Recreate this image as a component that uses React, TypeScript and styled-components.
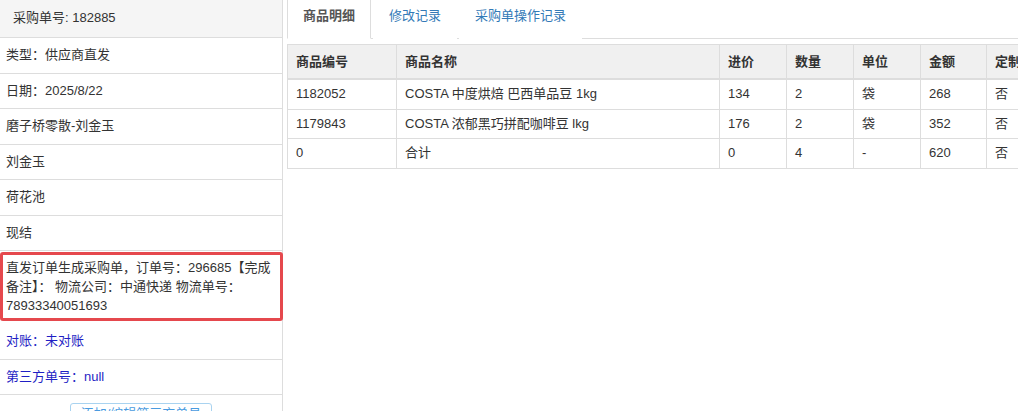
import styled, { createGlobalStyle } from 'styled-components'

type Tone = 'plain' | 'link'

type SideItemProps = {
  $tone?: Tone
  $marked?: boolean
}

type TabProps = {
  $active?: boolean
}

type RowType = {
  code: string
  name: string
  price: string
  qty: string
  unit: string
  amount: string
  custom: string
}

const GlobalStyle = createGlobalStyle`
  html, body {
    margin: 0;
    padding: 0;
    background: #fff;
  }

  body {
    font-family: 'Liberation Sans', 'Noto Sans CJK SC', sans-serif;
    font-size: 13px;
    color: #333;
  }
`

const Page = styled.div`
  display: flex;
  width: 1018px;
  height: 411px;
  overflow: hidden;
`

const Sidebar = styled.aside`
  width: 282px;
  flex-shrink: 0;
  border-right: 1px solid #ddd;
  display: flex;
  flex-direction: column;
`

const SideHeader = styled.div`
  background: #f5f5f5;
  padding: 8px 13px 10px;
  line-height: 19px;
  border-bottom: 1px solid #ddd;
`

const SideItem = styled.div<SideItemProps>`
  padding: ${p => (p.$marked ? '3px' : '8px 6px')};
  line-height: ${p => (p.$marked ? '19px' : '18.5px')};
  border-bottom: 1px solid #ddd;
  color: ${p => (p.$tone === 'link' ? '#1f1fc4' : '#333')};
  ${p => p.$marked && `
    border: 3px solid #e5484d;
    border-radius: 3px;
    margin-right: -1px;
    margin-top: 1px;
    margin-bottom: 3px;
  `}
`

const ButtonRow = styled.div`
  display: flex;
  justify-content: center;
  padding-top: 8px;
`

const OutlineButton = styled.button`
  font-family: inherit;
  font-size: 13px;
  line-height: 18px;
  color: #4a9be0;
  background: #fff;
  border: 1px solid #a9d3f0;
  border-radius: 3px;
  padding: 1px 10px 4px;
`

const Main = styled.main`
  flex: 1;
  min-width: 0;
  padding-left: 4px;
  overflow: hidden;
`

const TabBar = styled.nav`
  display: flex;
  border-bottom: 1px solid #ddd;
  height: 38px;
`

const Tab = styled.div<TabProps>`
  margin-right: 2px;
  padding: 7px 15px 11px;
  line-height: 18px;
  border: 1px solid ${p => (p.$active ? '#ddd' : 'transparent')};
  border-top: none;
  border-bottom-color: ${p => (p.$active ? '#fff' : 'transparent')};
  background: #fff;
  margin-bottom: -1px;
  color: ${p => (p.$active ? '#555' : '#337ab7')};
  font-weight: ${p => (p.$active ? 'bold' : 'normal')};
`

const Table = styled.table`
  margin-top: 5px;
  border-collapse: collapse;
  table-layout: fixed;
  width: 800px;
  border: 1px solid #ddd;
`

const HeadCell = styled.th`
  text-align: left;
  font-weight: bold;
  background: #f0f0f0;
  padding: 7px 8px;
  line-height: 19px;
  border: 1px solid #ddd;
  border-bottom: 2px solid #ddd;
  white-space: nowrap;
  overflow: hidden;
`

const Cell = styled.td`
  padding: 5px 8px;
  line-height: 18.5px;
  border: 1px solid #ddd;
  white-space: nowrap;
  overflow: hidden;
`

const columns = [
  { title: '商品编号', width: 109 },
  { title: '商品名称', width: 323 },
  { title: '进价', width: 67 },
  { title: '数量', width: 67 },
  { title: '单位', width: 67 },
  { title: '金额', width: 66 },
  { title: '定制', width: 100 },
]

const rows: RowType[] = [
  { code: '1182052', name: 'COSTA 中度烘焙 巴西单品豆 1kg', price: '134', qty: '2', unit: '袋', amount: '268', custom: '否' },
  { code: '1179843', name: 'COSTA 浓郁黑巧拼配咖啡豆 lkg', price: '176', qty: '2', unit: '袋', amount: '352', custom: '否' },
  { code: '0', name: '合计', price: '0', qty: '4', unit: '-', amount: '620', custom: '否' },
]

export default function App () {
  return (
    <>
      <GlobalStyle />
      <Page>
        <Sidebar>
          <SideHeader>采购单号: 182885</SideHeader>
          <SideItem>类型：供应商直发</SideItem>
          <SideItem>日期：2025/8/22</SideItem>
          <SideItem>磨子桥零散-刘金玉</SideItem>
          <SideItem>刘金玉</SideItem>
          <SideItem>荷花池</SideItem>
          <SideItem>现结</SideItem>
          <SideItem $marked>
            直发订单生成采购单，订单号：296685【完成备注】： 物流公司：中通快递 物流单号：78933340051693
          </SideItem>
          <SideItem $tone="link">对账：未对账</SideItem>
          <SideItem $tone="link">第三方单号：null</SideItem>
          <ButtonRow>
            <OutlineButton>添加/编辑第三方单号</OutlineButton>
          </ButtonRow>
        </Sidebar>

        <Main>
          <TabBar>
            <Tab $active>商品明细</Tab>
            <Tab>修改记录</Tab>
            <Tab>采购单操作记录</Tab>
          </TabBar>

          <Table>
            <colgroup>
              {columns.map(col => (
                <col key={col.title} style={{ width: col.width }} />
              ))}
            </colgroup>
            <thead>
              <tr>
                {columns.map(col => (
                  <HeadCell key={col.title}>{col.title}</HeadCell>
                ))}
              </tr>
            </thead>
            <tbody>
              {rows.map(row => (
                <tr key={row.code + row.name}>
                  <Cell>{row.code}</Cell>
                  <Cell>{row.name}</Cell>
                  <Cell>{row.price}</Cell>
                  <Cell>{row.qty}</Cell>
                  <Cell>{row.unit}</Cell>
                  <Cell>{row.amount}</Cell>
                  <Cell>{row.custom}</Cell>
                </tr>
              ))}
            </tbody>
          </Table>
        </Main>
      </Page>
    </>
  )
}
